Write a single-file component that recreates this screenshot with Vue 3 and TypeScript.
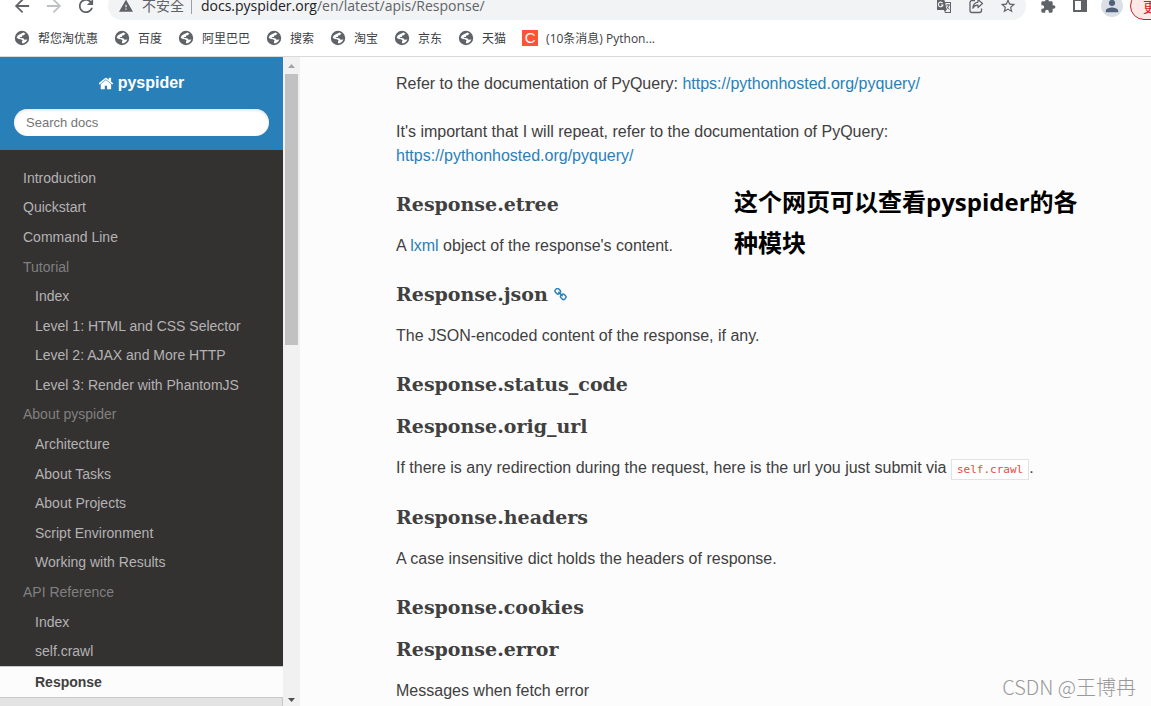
<script setup lang="ts">
interface NavItem {
  label: string
  kind: 'top' | 'caption' | 'sub'
}

const bookmarks: string[] = ['帮您淘优惠', '百度', '阿里巴巴', '搜索', '淘宝', '京东', '天猫']

const navItems: NavItem[] = [
  { label: 'Introduction', kind: 'top' },
  { label: 'Quickstart', kind: 'top' },
  { label: 'Command Line', kind: 'top' },
  { label: 'Tutorial', kind: 'caption' },
  { label: 'Index', kind: 'sub' },
  { label: 'Level 1: HTML and CSS Selector', kind: 'sub' },
  { label: 'Level 2: AJAX and More HTTP', kind: 'sub' },
  { label: 'Level 3: Render with PhantomJS', kind: 'sub' },
  { label: 'About pyspider', kind: 'caption' },
  { label: 'Architecture', kind: 'sub' },
  { label: 'About Tasks', kind: 'sub' },
  { label: 'About Projects', kind: 'sub' },
  { label: 'Script Environment', kind: 'sub' },
  { label: 'Working with Results', kind: 'sub' },
  { label: 'API Reference', kind: 'caption' },
  { label: 'Index', kind: 'sub' },
  { label: 'self.crawl', kind: 'sub' },
]
</script>

<template>
  <div class="browser">
    <header class="toolbar">
      <div class="nav-buttons">
        <button type="button" class="icon-button" aria-label="Back">
          <svg viewBox="3 3 18 18"><path d="M20 11H7.83l5.59-5.59L12 4l-8 8 8 8 1.41-1.41L7.83 13H20v-2z" /></svg>
        </button>
        <button type="button" class="icon-button faded" aria-label="Forward">
          <svg viewBox="3 3 18 18"><path d="M12 4l-1.41 1.41L16.17 11H4v2h12.17l-5.58 5.59L12 20l8-8z" /></svg>
        </button>
        <button type="button" class="icon-button" aria-label="Reload">
          <svg viewBox="3 3 18 18"><path d="M17.65 6.35C16.2 4.9 14.21 4 12 4c-4.42 0-7.99 3.58-7.99 8s3.57 8 7.99 8c3.73 0 6.84-2.55 7.73-6h-2.08c-.82 2.33-3.04 4-5.65 4-3.31 0-6-2.69-6-6s2.69-6 6-6c1.66 0 3.14.69 4.22 1.78L13 11h7V4l-2.35 2.35z" /></svg>
        </button>
      </div>

      <div class="address">
        <svg class="warning" viewBox="0 1 24 22"><path d="M1 21h22L12 2 1 21zm12-3h-2v-2h2v2zm0-4h-2v-4h2v4z" /></svg>
        <span class="insecure">不安全</span>
        <span class="divider"></span>
        <span class="url"><span class="host">docs.pyspider.org</span>/en/latest/apis/Response/</span>
        <div class="address-actions">
          <button type="button" class="icon-button" aria-label="Translate">
            <svg viewBox="0 0 16 16">
              <path d="M1 1h7l1 3h6v11H9l-1-3H1z" />
              <path d="M9.3 5H14v9H9.2l1.3-2z" fill="#f1f3f4" />
              <path d="M10 7h4M12 6v1M13 7q-.6 3-3 4.500M10.800 8.500q1 2 2.700 3" fill="none" stroke="#5f6368" stroke-width=".9" />
              <path d="M6.600 5.200A2.300 2.300 0 1 0 6.900 7H4.900" fill="none" stroke="#f1f3f4" stroke-width="1.100" />
            </svg>
          </button>
          <button type="button" class="icon-button" aria-label="Share">
            <svg viewBox="0 0 16 16">
              <path d="M7 2.500H4A2 2 0 0 0 2 4.500v8a2 2 0 0 0 2 2h7.500a2 2 0 0 0 2-2V10.500" fill="none" stroke="#5f6368" stroke-width="1.300" />
              <path d="M10 1.500 14.500 5.500 10 9.500V7.200Q6.500 7 4.800 10.200 5.200 4.800 10 4.100z" fill="none" stroke="#5f6368" stroke-width="1.200" stroke-linejoin="round" />
            </svg>
          </button>
          <button type="button" class="icon-button" aria-label="Bookmark this page">
            <svg viewBox="1 1 22 22"><path d="M22 9.240l-7.190-.62L12 2 9.190 8.630 2 9.240l5.460 4.730L5.820 21 12 17.270 18.180 21l-1.630-7.030L22 9.240zM12 15.400l-3.760 2.270 1-4.280-3.320-2.880 4.380-.38L12 6.100l1.710 4.040 4.380.38-3.320 2.880 1 4.280L12 15.400z" /></svg>
          </button>
        </div>
      </div>

      <div class="browser-actions">
        <button type="button" class="icon-button" aria-label="Extensions">
          <svg viewBox="0 0 24 24"><path d="M20.500 11H19V7c0-1.100-.9-2-2-2h-4V3.500C13 2.120 11.880 1 10.500 1S8 2.120 8 3.500V5H4c-1.100 0-1.990.9-1.990 2v3.800H3.500c1.490 0 2.700 1.210 2.700 2.700s-1.210 2.700-2.700 2.700H2V20c0 1.100.9 2 2 2h3.800v-1.500c0-1.490 1.210-2.700 2.700-2.700 1.490 0 2.700 1.210 2.700 2.700V22H17c1.100 0 2-.9 2-2v-4h1.500c1.380 0 2.500-1.120 2.500-2.500S21.880 11 20.500 11z" /></svg>
        </button>
        <button type="button" class="icon-button" aria-label="Side panel">
          <svg viewBox="0 0 16 16"><path d="M1 1h14v13H1zM3 3v9h6V3z" fill-rule="evenodd" /></svg>
        </button>
        <button type="button" class="avatar" aria-label="Profile">
          <svg viewBox="3 3 18 18"><path d="M12 12c2.210 0 4-1.790 4-4s-1.790-4-4-4-4 1.790-4 4 1.790 4 4 4zm0 2c-2.670 0-8 1.340-8 4v2h16v-2c0-2.660-5.330-4-8-4z" /></svg>
        </button>
        <button type="button" class="update">更新</button>
      </div>
    </header>

    <nav class="bookmarks" aria-label="Bookmarks">
      <a v-for="name in bookmarks" :key="name" href="#" class="bookmark">
        <svg class="globe" viewBox="0 0 16 16">
          <circle cx="8" cy="8" r="7.200" fill="#5f6368" />
          <path d="M2.600 7.700Q3.300 5 5.800 4.200L8 3.200 9.500 2.600 11.500 3.700 9.700 5.200 8.200 5.400 8 6.900 5.700 7.300 5.900 8.100 9.300 8.300 10.500 9.700 12.900 9.600 13.400 9Q12.500 12.800 8.300 13.500L7.900 11.700 8.600 10.300 6.900 9.200 4.800 9.100z" fill="#fff" />
        </svg>
        <span>{{ name }}</span>
      </a>
      <a href="#" class="bookmark">
        <span class="csdn-badge" aria-hidden="true">C</span>
        <span>(10条消息) Python...</span>
      </a>
    </nav>

    <div class="page">
      <aside class="sidebar">
        <div class="side-header">
          <a href="#" class="brand">
            <svg viewBox="64 200 1664 1400"><path d="M1408 992v480q0 26-19 45t-45 19h-384v-384h-256v384h-384q-26 0-45-19t-19-45v-480q0-1 .5-3t.5-3l575-474 575 474q1 2 1 6zm223-69l-62 74q-8 9-21 11h-3q-13 0-21-7l-692-577-692 577q-12 8-24 7-13-2-21-11l-62-74q-8-10-7-23.500t11-21.500l719-599q32-26 76-26t76 26l244 204v-195q0-14 9-23t23-9h192q14 0 23 9t9 23v408l219 182q10 8 11 21.500t-7 23.500z" /></svg>
            <span>pyspider</span>
          </a>
          <input type="text" class="search" placeholder="Search docs" aria-label="Search docs" />
        </div>
        <ul class="menu">
          <li v-for="(item, i) in navItems" :key="i" :class="item.kind">
            <span v-if="item.kind === 'caption'">{{ item.label }}</span>
            <a v-else href="#">{{ item.label }}</a>
          </li>
        </ul>
        <a href="#" class="current" aria-current="page">Response</a>
        <div class="current-sections"></div>
      </aside>

      <div class="scrollbar" aria-hidden="true">
        <svg viewBox="0 0 17 17"><path d="M5 11 8.500 7 12 11z" fill="#a3a3a3" /></svg>
        <div class="track"><div class="thumb"></div></div>
        <svg viewBox="0 0 17 17"><path d="M5 9h7L8.500 13z" fill="#505050" /></svg>
      </div>

      <main class="content">
        <p>Refer to the documentation of PyQuery: <a href="#">https://pythonhosted.org/pyquery/</a></p>
        <p>It's important that I will repeat, refer to the documentation of PyQuery: <a href="#">https://pythonhosted.org/pyquery/</a></p>
        <h3>Response.etree</h3>
        <p>A <a href="#">lxml</a> object of the response's content.</p>
        <h3>
          Response.json
          <a href="#" class="permalink" aria-label="Permalink">
            <svg viewBox="64 64 1664 1664"><path d="M1520 1216q0-40-28-68l-208-208q-28-28-68-28-42 0-72 32 3 3 19 18.500t21.500 21.500 15 19 13 25.500 3.500 27.500q0 40-28 68t-68 28q-15 0-27.500-3.500t-25.500-13-19-15-21.500-21.500-18.500-19q-33 31-33 73 0 40 28 68l206 207q27 27 68 27 40 0 68-26l147-146q28-28 28-67zm-703-705q0-40-28-68l-206-207q-28-28-68-28-39 0-68 27l-147 146q-28 28-28 67 0 40 28 68l208 208q27 27 68 27 42 0 72-31-3-3-19-18.500t-21.500-21.500-15-19-13-25.500-3.500-27.500q0-40 28-68t68-28q15 0 27.500 3.500t25.500 13 19 15 21.500 21.500 18.500 19q33-31 33-73zm895 705q0 120-85 203l-147 146q-83 83-203 83-121 0-204-85l-206-207q-83-83-83-203 0-123 88-209l-88-88q-86 88-208 88-120 0-204-84l-208-208q-84-84-84-204t85-203l147-146q83-83 203-83 121 0 204 85l206 207q83 83 83 203 0 123-88 209l88 88q86-88 208-88 120 0 204 84l208 208q84 84 84 204z" /></svg>
          </a>
        </h3>
        <p>The JSON-encoded content of the response, if any.</p>
        <h3>Response.status_code</h3>
        <h3>Response.orig_url</h3>
        <p>If there is any redirection during the request, here is the url you just submit via <code>self.crawl</code>.</p>
        <h3>Response.headers</h3>
        <p>A case insensitive dict holds the headers of response.</p>
        <h3>Response.cookies</h3>
        <h3>Response.error</h3>
        <p>Messages when fetch error</p>
        <div class="note">这个网页可以查看pyspider的各种模块</div>
        <div class="watermark">CSDN @王博冉</div>
      </main>
    </div>
  </div>
</template>

<style>
body {
  margin: 0;
}
</style>

<style scoped>
* {
  box-sizing: border-box;
}

.browser {
  display: flex;
  flex-direction: column;
  height: 100vh;
  overflow: hidden;
  background: #fff;
  color: #404040;
  font-family: "Liberation Sans", "Noto Sans CJK SC", sans-serif;
}

a {
  color: #2980b9;
  text-decoration: none;
}

button {
  padding: 0;
  border: 0;
  background: none;
  font: inherit;
}

svg {
  display: block;
  fill: currentColor;
}

/* The toolbar is scrolled partly under the window's top edge. */
.toolbar {
  display: flex;
  flex: none;
  align-items: center;
  height: 28px;
  margin-top: -8px;
  padding-left: 14px;
  color: #5f6368;
}

.nav-buttons,
.address-actions {
  display: flex;
  gap: 16px;
}

.icon-button,
.icon-button svg {
  flex: none;
  width: 16px;
  height: 16px;
}

.icon-button {
  color: #5f6368;
}

.icon-button.faded {
  color: #bdc1c6;
}

.address {
  display: flex;
  flex: 1;
  align-items: center;
  height: 28px;
  margin: 0 14px;
  padding: 0 10px;
  border-radius: 14px;
  background: #f1f3f4;
  font-family: "Open Sans", "Noto Sans CJK SC", sans-serif;
  font-size: 14px;
  line-height: 20px;
  white-space: nowrap;
}

.warning {
  width: 16px;
  height: 14px;
}

.insecure {
  margin: 0 7px 0 8px;
}

.divider {
  width: 1px;
  height: 16px;
  margin-right: 9px;
  background: #9aa0a6;
}

.host {
  color: #202124;
}

.address-actions {
  margin-left: auto;
}

.browser-actions {
  display: flex;
  flex: none;
  align-items: center;
  gap: 16px;
  width: 111px;
  overflow: hidden;
}

.avatar {
  display: grid;
  flex: none;
  place-items: center;
  width: 22px;
  height: 22px;
  margin: 0 -9px 0 -3px;
  border-radius: 50%;
  background: #dadfe6;
  color: #52607a;
}

.avatar svg {
  width: 14px;
  height: 14px;
}

.update {
  flex: none;
  height: 28px;
  padding: 0 12px;
  border: 1px solid #c5221f;
  border-radius: 14px;
  background: #fce8e6;
  color: #c5221f;
  font-size: 14px;
}

.bookmarks {
  display: flex;
  flex: none;
  align-items: center;
  gap: 16px;
  height: 37px;
  padding: 0 14px;
  border-bottom: 1px solid #d9dadc;
  font-family: "Open Sans", "Noto Sans CJK SC", sans-serif;
  font-size: 12px;
  white-space: nowrap;
}

.bookmark {
  display: flex;
  align-items: center;
  gap: 8px;
  color: #3c4043;
}

.globe {
  width: 16px;
  height: 16px;
}

.csdn-badge {
  width: 16px;
  height: 16px;
  background: #fc5531;
  color: #fff;
  font-family: "Liberation Sans", sans-serif;
  font-size: 15px;
  line-height: 16px;
  text-align: center;
}

.page {
  display: flex;
  flex: 1;
  min-height: 0;
}

.sidebar {
  display: flex;
  flex: none;
  flex-direction: column;
  width: 283px;
  background: #343131;
  font-size: 14px;
}

.side-header {
  display: flex;
  flex-direction: column;
  gap: 14px;
  padding: 14px;
  background: #2980b9;
}

.brand {
  display: flex;
  align-items: center;
  justify-content: center;
  gap: 4px;
  color: #fff;
  font-size: 16px;
  font-weight: bold;
  line-height: 24px;
}

.brand svg {
  width: 15px;
  height: 13px;
}

.search {
  width: 100%;
  height: 27px;
  padding: 0 12px;
  border: 0;
  border-radius: 14px;
  background: #fff;
  box-shadow: inset 0 1px 3px #ddd;
  font-family: inherit;
  font-size: 13px;
}

.search::placeholder {
  color: #757575;
}

.menu {
  display: grid;
  flex: 1;
  grid-auto-rows: 1fr;
  align-items: center;
  margin: 0;
  padding: 13px 0 0;
  list-style: none;
}

.menu li {
  padding-left: 23px;
}

.menu .sub {
  padding-left: 35px;
}

.menu a {
  color: #b3b3b3;
}

.menu .caption {
  color: #808080;
}

.current {
  padding-left: 35px;
  border-top: 1px solid #c9c9c9;
  background: #fcfcfc;
  color: #404040;
  font-weight: bold;
  line-height: 30px;
}

.current-sections {
  height: 9px;
  border: solid #c9c9c9;
  border-width: 1px 1px 0 0;
  background: #e3e3e3;
}

.scrollbar {
  display: flex;
  flex: none;
  flex-direction: column;
  width: 17px;
  background: #f1f1f1;
}

.scrollbar svg {
  width: 17px;
  height: 17px;
}

.track {
  flex: 1;
  padding: 0 2px;
}

.thumb {
  height: 44%;
  background: #c1c1c1;
}

.content {
  position: relative;
  flex: 1;
  min-width: 0;
  padding: 15px 96px 0;
  overflow: hidden;
  background: #fcfcfc;
  font-size: 16px;
  line-height: 24px;
}

p {
  margin: 0 0 24px;
}

h3 {
  display: flex;
  align-items: center;
  gap: 6px;
  margin: 0 0 18px;
  font-family: "DejaVu Serif", serif;
  font-size: 19px;
  line-height: 24px;
}

.permalink svg {
  width: 13px;
  height: 13px;
}

code {
  padding: 3px 5px;
  border: 1px solid #e1e4e5;
  background: #fff;
  color: #e74c3c;
  font-family: "DejaVu Sans Mono", monospace;
  font-size: 11px;
  line-height: 22px;
}

.note {
  position: absolute;
  top: 124px;
  left: 434px;
  width: 350px;
  color: #000;
  font-family: "Open Sans", "Noto Sans CJK SC", sans-serif;
  font-size: 24px;
  font-weight: bold;
  line-height: 41px;
}

.watermark {
  position: absolute;
  right: 15px;
  bottom: 7px;
  color: #999;
  font-family: "Noto Sans CJK SC", sans-serif;
  font-size: 20px;
  font-weight: 300;
}
</style>
